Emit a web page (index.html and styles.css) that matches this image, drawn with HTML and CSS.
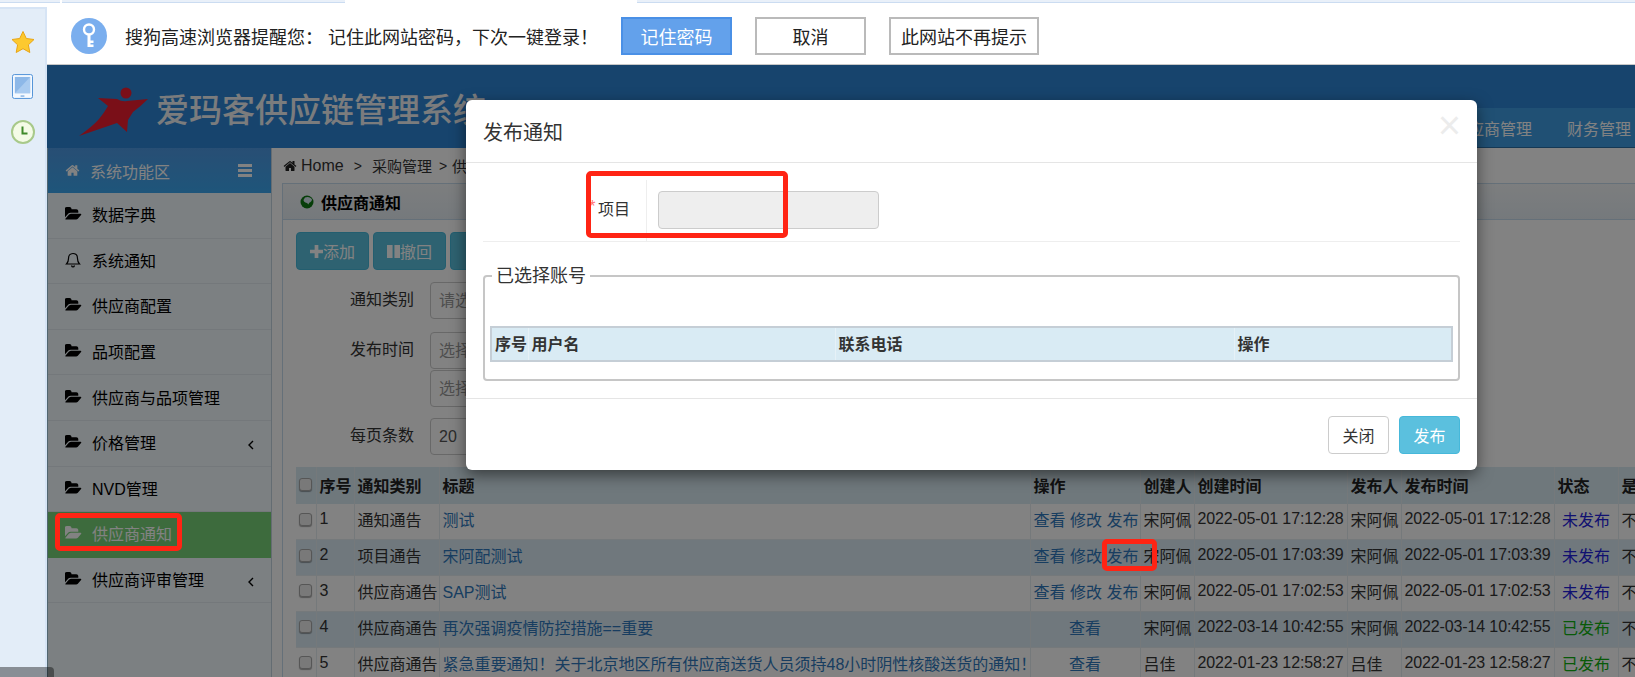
FILE: index.html
```html
<!DOCTYPE html>
<html lang="zh-CN">
<head>
<meta charset="utf-8">
<title>供应商通知</title>
<link rel="stylesheet" href="styles.css">
</head>
<body>
<svg class="defs" width="0" height="0" aria-hidden="true">
  <symbol id="i-folder" viewBox="0 0 1920 1792"><path d="M1845 931q0 35-35 73l-336 396q-43 51-120.500 86.500t-143.500 35.500h-1088q-34 0-60.500-13t-26.500-43q0-35 35-73l336-396q43-51 120.500-86.500t143.500-35.500h1088q34 0 60.500 13t26.500 43zm-343-344v160h-832q-94 0-197 47.500t-164 119.500l-337 396-5 6q0-4-.5-12.500t-.5-12.500v-960q0-92 66-158t158-66h320q92 0 158 66t66 158v32h544q92 0 158 66t66 158z"/></symbol>
  <symbol id="i-home" viewBox="0 0 1792 1792"><path d="M1472 992v480q0 26-19 45t-45 19h-384v-384h-256v384h-384q-26 0-45-19t-19-45v-480q0-1 .5-3t.5-3l575-474 575 474q1 2 1 6zm223-69l-62 74q-8 9-21 11h-3q-13 0-21-7l-692-577-692 577q-12 8-24 7-13-2-21-11l-62-74q-8-10-7-23.500t11-21.500l719-599q32-26 76-26t76 26l244 204v-195q0-14 9-23t23-9h192q14 0 23 9t9 23v408l219 182q10 8 11 21.500t-7 23.500z"/></symbol>
  <symbol id="i-chev" viewBox="0 0 6 10"><path d="M5 1 1 5l4 4" fill="none" stroke="currentColor" stroke-width="1.4"/></symbol>
</svg>

<div class="tabstrip"><span class="tab-a"></span><span class="tab-b"></span><span class="tab-c"></span></div>

<div class="shell">
  <aside class="dock">
    <svg class="dock-star" viewBox="0 0 24 24"><path d="M12 1.500l3.300 7 7.700 1-5.600 5.300 1.400 7.700L12 18.700l-6.800 3.800 1.400-7.700L1 9.500l7.700-1z" fill="#fdc92f" stroke="#e9a514" stroke-width="1"/></svg>
    <svg class="dock-tablet" viewBox="0 0 22 26"><rect x=".5" y=".5" width="21" height="25" rx="2" fill="#f4f9ff" stroke="#4c8fd6"/><rect x="3" y="3" width="16" height="17" fill="#8db8e8"/><path d="M3 20 19 3v17z" fill="#a9cbf0"/><rect x="9" y="22.500" width="4" height="1" fill="#4c8fd6"/></svg>
    <svg class="dock-clock" viewBox="0 0 24 24"><circle cx="12" cy="12" r="11" fill="#f4fbe6" stroke="#a8c98a" stroke-width="2"/><path d="M11.500 6.500v7h5" fill="none" stroke="#3f8a2a" stroke-width="2"/></svg>
  </aside>

  <div class="main">
    <div class="infobar">
      <svg class="key" viewBox="0 0 36 36"><circle cx="18" cy="18" r="18" fill="#7aaeee"/><circle cx="18" cy="11.500" r="5" fill="none" stroke="#fff" stroke-width="2.400"/><path d="M16.500 16v13h6v-2.500h-3V25h3v-2.500h-3V16z" fill="#fff"/></svg>
      <span class="info-text">搜狗高速浏览器提醒您： 记住此网站密码，下次一键登录！</span>
      <button class="ib-btn ib-primary">记住密码</button>
      <button class="ib-btn">取消</button>
      <button class="ib-btn ib-wide">此网站不再提示</button>
    </div>

    <div class="page">
      <header class="top">
        <div class="brand">
          <svg class="logo" viewBox="0 0 70 50"><circle cx="47" cy="6" r="5.500" fill="#f01e30"/><path d="M19 11 38 12q5 3 10 2l21-2q-8 8-15 13l-5 8-1 12-10-9L0 49q14-10 20-17 5-6 9-13z" fill="#f01e30"/></svg>
          <span class="brand-name">爱玛客供应链管理系统</span>
        </div>
        <nav class="topnav"><a>供应商管理</a><a>财务管理</a></nav>
      </header>

      <div class="body">
        <aside class="side">
          <div class="side-head">
            <svg class="ic-home"><use href="#i-home"/></svg>
            <span class="side-title">系统功能区</span>
            <span class="burger"><i></i><i></i><i></i></span>
          </div>
          <ul class="menu">
            <li><svg class="ic-folder"><use href="#i-folder"/></svg>数据字典</li>
            <li><svg class="ic-bell" viewBox="0 0 16 16"><path d="M8 1.500c-3 0-4.500 2.300-4.500 5 0 3-1 4.500-2 5.500h13c-1-1-2-2.500-2-5.500 0-2.700-1.500-5-4.500-5zM6.500 13.500c.3 1 .8 1.500 1.500 1.500s1.200-.5 1.500-1.500" fill="none" stroke="#000" stroke-width="1.200"/></svg>系统通知</li>
            <li><svg class="ic-folder"><use href="#i-folder"/></svg>供应商配置</li>
            <li><svg class="ic-folder"><use href="#i-folder"/></svg>品项配置</li>
            <li><svg class="ic-folder"><use href="#i-folder"/></svg>供应商与品项管理</li>
            <li><svg class="ic-folder"><use href="#i-folder"/></svg>价格管理<svg class="ic-chev"><use href="#i-chev"/></svg></li>
            <li><svg class="ic-folder"><use href="#i-folder"/></svg>NVD管理</li>
            <li class="active"><svg class="ic-folder"><use href="#i-folder"/></svg>供应商通知</li>
            <li><svg class="ic-folder"><use href="#i-folder"/></svg>供应商评审管理<svg class="ic-chev"><use href="#i-chev"/></svg></li>
          </ul>
        </aside>

        <section class="content">
          <div class="crumbs">
            <svg class="ic-crumb"><use href="#i-home"/></svg><span>Home</span><span class="sep">&gt;</span><span class="crumb-cn">采购管理</span><span class="sep sep-tight">&gt;</span><span class="crumb-cn">供应商通知</span>
          </div>
          <div class="panel">
            <div class="panel-head">
              <svg class="globe" viewBox="0 0 14 14"><circle cx="7" cy="7" r="6.500" fill="#0e7a12"/><path d="M5 2.500c3-1.500 6 0 7 2-.5 3-3 2.500-3.500 5L7 8C4.500 7.500 3.500 6 3.500 5z" fill="#d8e8f0"/></svg>
              <b>供应商通知</b>
            </div>
            <div class="panel-body">
              <div class="toolbar">
                <button class="tool"><svg class="ic-plus" viewBox="0 0 14 14"><path d="M5 0h4v5h5v4H9v5H5V9H0V5h5z"/></svg>添加</button>
                <button class="tool"><svg class="ic-pause" viewBox="0 0 14 14"><path d="M0 0h6v14H0zM8 0h6v14H8z"/></svg>撤回</button>
                <button class="tool"></button>
              </div>
              <div class="filter"><label>通知类别</label><input class="field" placeholder="请选择"></div>
              <div class="filter f-date"><label>发布时间</label><div class="stack"><input class="field" placeholder="选择开始时间"><input class="field" placeholder="选择结束时间"></div></div>
              <div class="filter f-size"><label>每页条数</label><input class="field" value="20"></div>

              <table class="grid">
                <colgroup><col class="c-check"><col class="c-no"><col class="c-type"><col class="c-title"><col class="c-ops"><col class="c-user"><col class="c-time"><col class="c-user"><col class="c-time"><col class="c-state"><col class="c-last"></colgroup>
                <thead>
                  <tr><th><input type="checkbox"></th><th>序号</th><th>通知类别</th><th>标题</th><th>操作</th><th>创建人</th><th>创建时间</th><th>发布人</th><th>发布时间</th><th>状态</th><th>是</th></tr>
                </thead>
                <tbody>
                  <tr><td><input type="checkbox"></td><td>1</td><td>通知通告</td><td><a>测试</a></td><td class="ops"><a>查看</a> <a>修改</a> <a>发布</a></td><td>宋阿佩</td><td class="time">2022-05-01 17:12:28</td><td>宋阿佩</td><td class="time">2022-05-01 17:12:28</td><td class="state off">未发布</td><td>不</td></tr>
                  <tr><td><input type="checkbox"></td><td>2</td><td>项目通告</td><td><a>宋阿配测试</a></td><td class="ops"><a>查看</a> <a>修改</a> <a>发布</a></td><td>宋阿佩</td><td class="time">2022-05-01 17:03:39</td><td>宋阿佩</td><td class="time">2022-05-01 17:03:39</td><td class="state off">未发布</td><td>不</td></tr>
                  <tr><td><input type="checkbox"></td><td>3</td><td>供应商通告</td><td><a>SAP测试</a></td><td class="ops"><a>查看</a> <a>修改</a> <a>发布</a></td><td>宋阿佩</td><td class="time">2022-05-01 17:02:53</td><td>宋阿佩</td><td class="time">2022-05-01 17:02:53</td><td class="state off">未发布</td><td>不</td></tr>
                  <tr><td><input type="checkbox"></td><td>4</td><td>供应商通告</td><td><a>再次强调疫情防控措施==重要</a></td><td class="ops"><a>查看</a></td><td>宋阿佩</td><td class="time">2022-03-14 10:42:55</td><td>宋阿佩</td><td class="time">2022-03-14 10:42:55</td><td class="state on">已发布</td><td>不</td></tr>
                  <tr><td><input type="checkbox"></td><td>5</td><td>供应商通告</td><td><a>紧急重要通知！关于北京地区所有供应商送货人员须持48小时阴性核酸送货的通知！</a></td><td class="ops"><a>查看</a></td><td>吕佳</td><td class="time">2022-01-23 12:58:27</td><td>吕佳</td><td class="time">2022-01-23 12:58:27</td><td class="state on">已发布</td><td>不</td></tr>
                </tbody>
              </table>
            </div>
          </div>
        </section>
      </div>

      <div class="backdrop"></div>

      <div class="modal">
        <div class="modal-head"><h4>发布通知</h4><span class="close">×</span></div>
        <div class="modal-body">
          <div class="m-row">
            <label class="m-label"><span class="req">*</span> 项目</label>
            <div class="m-ctrl"><input class="m-input" disabled></div>
          </div>
          <fieldset class="m-set">
            <legend>已选择账号</legend>
            <table class="m-table">
              <colgroup><col class="mc-no"><col class="mc-user"><col class="mc-tel"><col></colgroup>
              <thead><tr><th>序号</th><th>用户名</th><th>联系电话</th><th>操作</th></tr></thead>
            </table>
          </fieldset>
        </div>
        <div class="modal-foot"><button class="m-btn">关闭</button><button class="m-btn m-info">发布</button></div>
      </div>

      <span class="mark mark-form"></span>
      <span class="mark mark-menu"></span>
      <span class="mark mark-op"></span>
    </div>
  </div>
</div>
<div class="hscroll"></div>
</body>
</html>
```
FILE: styles.css
```css
* { box-sizing: border-box; }
html, body { margin: 0; height: 100%; }
body {
  width: 1635px; height: 677px; overflow: hidden; position: relative;
  font-family: "Liberation Sans", "Noto Sans CJK SC", sans-serif;
  font-size: 16px; color: #333; background: #fff;
  display: flex; flex-direction: column;
}
.defs { position: absolute; }
button, input { font: inherit; }

/* browser tab strip */
.tabstrip { height: 7px; flex: none; display: flex; align-items: flex-start; }
.tabstrip span { display: block; height: 3px; background: #e9f0f9; border-bottom: 1px solid #cbdcf1; }
.tab-a { width: 60px; }
.tab-b { width: 283px; margin-left: 2px; }
.tab-c { flex: 1; margin-left: 292px; }

.shell { flex: 1; display: flex; min-height: 0; }

/* browser side dock */
.dock {
  width: 47px; flex: none; background: #e3edf8;
  border-top: 2px solid #d6e4f5; border-right: 2px solid #d6e4f5;
  display: flex; flex-direction: column; align-items: center;
  padding-top: 21px;
}
.dock-star { width: 24px; height: 24px; }
.dock-tablet { width: 21px; height: 25px; margin-top: 20px; }
.dock-clock { width: 24px; height: 24px; margin-top: 21px; }

.main { flex: 1; display: flex; flex-direction: column; min-width: 0; }

/* save-password bar */
.infobar {
  height: 58px; flex: none; background: #fff; border-bottom: 1px solid #c8c8c8;
  display: flex; align-items: center; padding: 0 0 0 24px; font-size: 18px; color: #222;
}
.key { width: 36px; height: 36px; flex: none; }
.info-text { margin-left: 18px; white-space: pre; width: 496px; }
.ib-btn {
  width: 111px; height: 38px; margin-right: 23px; padding: 0; background: #fff;
  border: 2px solid #bababa; font-size: 18px; color: #222;
}
.ib-primary { background: #63a1eb; border-color: #4a90e6; color: #fff; }
.ib-wide { width: 150px; }

/* dimmed application */
.page { flex: 1; position: relative; overflow: hidden; min-height: 0; display: flex; flex-direction: column; }
.backdrop { position: absolute; inset: 0; background: rgba(0,0,0,.49); z-index: 10; }

.top { height: 83px; flex: none; background: #2e86d6; display: flex; justify-content: space-between; position: relative; }
.brand { display: flex; align-items: flex-start; padding: 22px 0 0 32px; }
.logo { width: 70px; height: 50px; flex: none; }
.brand-name { color: #f2f4f6; font-size: 33px; font-weight: 500; line-height: 46px; margin: 1px 0 0 7px; white-space: nowrap; }
.topnav {
  align-self: flex-end; height: 40px; background: #3f9ee4; border-bottom: 1px solid #2a6ea5;
  display: flex; align-items: center; color: #fff; white-space: nowrap; padding-left: 40px; width: 1000px;
  justify-content: flex-end;
}
.topnav a { padding: 0 4px 0 31px; }

.body { flex: 1; display: flex; min-height: 0; }

.side { width: 225px; flex: none; background: #f4fbff; border-left: 1px solid #9fc8dc; border-right: 1px solid #c4d4df; }
.side-head {
  height: 45px; background: linear-gradient(#4f9ae4, #3ca8f0); color: #fff;
  display: flex; align-items: center; padding-left: 17px;
}
.ic-home { width: 15px; height: 15px; fill: #fff; flex: none; }
.side-title { margin-left: 10px; flex: 1; }
.burger { display: flex; flex-direction: column; gap: 2.500px; width: 14px; margin-right: 19px; }
.burger i { display: block; height: 2.500px; background: #fff; }

.menu { list-style: none; margin: 0; padding: 0; color: #000; }
.menu li {
  height: 45.600px; display: flex; align-items: center; padding: 0 0 2px 17px;
  border-bottom: 1px solid #e4ecf1; position: relative;
}
.ic-folder { width: 17px; height: 16px; fill: #000; flex: none; margin-right: 10px; }
.ic-bell { width: 16px; height: 16px; flex: none; margin-right: 11px; }
.ic-chev { position: absolute; right: 17px; top: 19px; width: 6px; height: 10px; color: #000; }
.menu .active { background: #78d278; color: #fff; border-bottom-color: #78d278; }
.menu .active .ic-folder { fill: #fff; }

.content { flex: 1; min-width: 0; padding-left: 10px; background: #fff; }
.crumbs { height: 35px; display: flex; align-items: center; color: #333; white-space: nowrap; padding-left: 1px; }
.crumb-cn { font-size: 15px; }
.ic-crumb { width: 14px; height: 14px; fill: #222; margin-right: 4px; flex: none; }
.sep { margin: 0 10px; font-size: 14px; }
.sep-tight { margin: 0 5px 0 7px; }

.panel { border: 1px solid #c6dbee; border-right: 0; width: 1400px; min-height: 600px; }
.panel-head {
  height: 36px; display: flex; align-items: center; padding-left: 17px; color: #000;
  background: linear-gradient(#f4f7f9, #e6eef4); border-bottom: 1px solid #c6dbee;
}
.globe { width: 14px; height: 14px; margin-right: 7px; }
.panel-body { padding: 12px 0 0 13px; }

.toolbar { display: flex; gap: 4px; height: 38px; }
.tool {
  width: 73px; height: 38px; padding: 0; border: 1px solid #46b8da; border-radius: 4px;
  background: #5bc0de; color: #fff; display: flex; align-items: center; justify-content: center;
}
.ic-plus, .ic-pause { width: 13px; height: 13px; fill: #fff; flex: none; }

.filter { display: flex; gap: 16px; margin-top: 12px; }
.filter label { width: 118px; text-align: right; line-height: 36px; }
.f-date { margin-top: 13px; }
.f-size { margin-top: 11px; }
.stack { display: flex; flex-direction: column; gap: 1px; }
.field {
  width: 300px; height: 37px; border: 1px solid #ccc; border-radius: 4px; padding: 0 8px;
  background: #fff; color: #555; display: block;
}
.field::placeholder { color: #999; }

.grid { border-collapse: collapse; table-layout: fixed; width: 1340px; margin-top: 12px; }
.c-check { width: 20px; } .c-no { width: 38px; } .c-type { width: 85px; }
.c-title { width: 591px; } .c-ops { width: 110px; } .c-user { width: 54px; }
.c-time { width: 153px; } .c-state { width: 64px; } .c-last { width: 64px; }
.grid th, .grid td {
  padding: 0 3px 5px; height: 35.800px; border-right: 1px solid #e6eef2; text-align: left;
  white-space: nowrap; overflow: hidden; font-weight: 400; color: #333;
}
.grid th { height: 37px; padding-bottom: 2px; background: #d9ebf4; font-weight: 700; color: #222; }
.grid input {
  appearance: none; width: 13px; height: 13px; margin: 0; display: block;
  background: #eee; border: 1px solid #aaa; border-radius: 3px; box-shadow: 0 1px 1px rgba(0,0,0,.35);
}
.grid tbody tr:nth-child(even) td { background: #dcecf6; }
.grid tbody tr td { border-bottom: 1px solid #e6eef2; }
.grid a { color: #2f79bd; }
.grid .time { letter-spacing: -.13px; }
.grid .ops, .grid .state { text-align: center; }
.grid .off { color: #2222dd; }
.grid .on { color: #10b010; }

/* modal */
.modal {
  position: absolute; z-index: 20; left: 419px; top: 35px; width: 1011px; height: 370px;
  background: #fff; border-radius: 6px; box-shadow: 0 5px 15px rgba(0,0,0,.5);
  display: flex; flex-direction: column;
}
.modal-head {
  height: 63px; flex: none; border-bottom: 1px solid #e5e5e5; padding: 0 17px;
  display: flex; justify-content: space-between; align-items: center;
}
.modal-head h4 { margin: 0; font-size: 20px; font-weight: 400; color: #333; }
.close { font-size: 40px; color: #000; opacity: .07; font-weight: 400; line-height: 1; margin: -13px -1px 0 0; }
.modal-body { padding: 17px 17px 0; flex: 1; }
.m-row { display: flex; height: 62px; border-bottom: 1px solid #eee; }
.m-label { width: 164px; border-right: 1px solid #eee; padding-right: 16px; text-align: right; line-height: 60px; color: #333; }
.req { color: #f77; position: relative; top: -3px; left: 2px; }
.m-ctrl { padding: 11px 0 0 11px; }
.m-input { width: 221px; height: 38px; background: #eee; border: 1px solid #ccc; border-radius: 4px; display: block; }
.m-set { margin: 21px 0 0; padding: 0 5px; height: 118px; border: 2px solid #c6c6c6; border-radius: 4px; position: relative; min-width: 0; }
.m-set legend { font-size: 18px; padding: 0 4px; margin-left: 2px; line-height: 26px; color: #333; }
.m-table { width: 100%; border-collapse: collapse; table-layout: fixed; margin-top: 37px; border: 2px solid #c5ced6; }
.mc-no { width: 37px; } .mc-user { width: 307px; } .mc-tel { width: 399px; }
.m-table th { height: 34px; background: #d9ebf4; text-align: left; padding: 0 2px 2px 3px; font-weight: 700; color: #333; border-right: 1px solid #e6f1f7; white-space: nowrap; }
.modal-foot { height: 72px; flex: none; border-top: 1px solid #e5e5e5; display: flex; justify-content: flex-end; gap: 10px; padding: 17px 17px 0; }
.m-btn { width: 61px; height: 38px; padding: 0; border: 1px solid #ccc; border-radius: 4px; background: #fff; color: #333; }
.m-info { background: #5bc0de; border-color: #46b8da; color: #fff; }

/* red hand-drawn annotations */
.mark { position: absolute; z-index: 30; border: 5px solid #ff2414; border-radius: 5px; }
.mark-form { left: 539px; top: 106px; width: 202px; height: 67px; }
.mark-menu { left: 8px; top: 448px; width: 127px; height: 38px; }
.mark-op { left: 1055px; top: 474px; width: 55px; height: 32px; }

.hscroll {
  position: absolute; z-index: 40; left: 0; bottom: 0; width: 54px; height: 10px;
  background: rgba(0,0,0,.4); border-top-right-radius: 4px;
}
```
